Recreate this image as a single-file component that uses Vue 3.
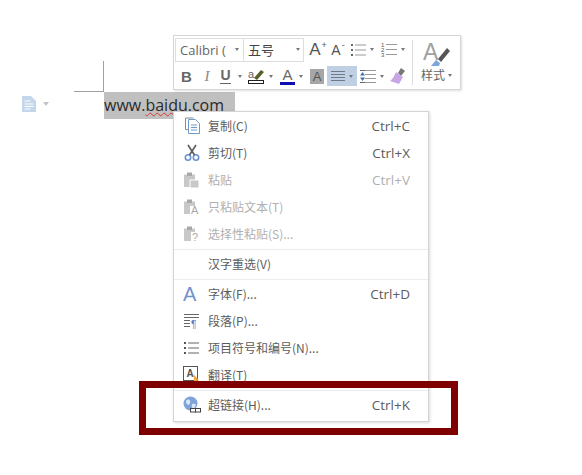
<template>
  <div class="page">
    <div class="crop-v"></div>
    <div class="crop-h"></div>

    <div class="margin-icon">
      <svg width="14" height="16" viewBox="0 0 14 16">
        <path d="M0 0h9l5 5v11H0z" fill="#c3d6ea" />
        <path d="M2.500 5h6M2.500 8h9M2.500 10.500h9M2.500 13h6" stroke="#fff" stroke-width="1.200" />
      </svg>
      <span class="margin-caret"></span>
    </div>

    <div class="doc-line"><span class="selected"><span class="url">www.<span class="typo">baidu</span>.com</span></span></div>

    <div class="toolbar">
      <div class="tool-main">
        <div class="tool-row first">
          <div class="combo font-combo">Calibri (<span class="caret"></span></div>
          <div class="combo size-combo">五号<span class="caret"></span></div>
          <div class="tool grow-a" style="width: 20px"><b>A</b><sup>+</sup></div>
          <div class="tool grow-a small" style="width: 20px"><b>A</b><sup>-</sup></div>
          <div class="tool" style="width: 28px">
            <svg width="16" height="14" v-html="icons.bullets"></svg><span class="caret"></span>
          </div>
          <div class="tool" style="width: 33px">
            <svg width="16" height="17" v-html="icons.numbers"></svg><span class="caret"></span>
          </div>
        </div>
        <div class="tool-row second">
          <div class="tool fmt bold" style="width: 21px">B</div>
          <div class="tool fmt ital" style="width: 20px">I</div>
          <div class="tool fmt under" style="width: 28px"><span class="u">U</span><span class="caret"></span></div>
          <div class="tool" style="width: 31px">
            <svg width="17" height="17" v-html="icons.highlight"></svg><span class="caret"></span>
          </div>
          <div class="tool" style="width: 31px">
            <span class="font-color">A</span><span class="caret"></span>
          </div>
          <div class="tool" style="width: 20px"><span class="shade">A</span></div>
          <div class="tool active" style="width: 30px">
            <svg width="14" height="12" v-html="icons.align"></svg><span class="caret"></span>
          </div>
          <div class="tool" style="width: 29px">
            <svg width="16" height="15" v-html="icons.spacing"></svg><span class="caret"></span>
          </div>
          <div class="tool" style="width: 22px">
            <svg width="18" height="18" v-html="icons.brush"></svg>
          </div>
        </div>
      </div>
      <div class="tool-style">
        <svg width="28" height="27" v-html="icons.pen"></svg>
        <div class="style-label">样式<span class="caret"></span></div>
      </div>
    </div>

    <div class="menu">
      <template v-for="(item, i) in menu" :key="i">
        <div v-if="item.sep" class="sep"></div>
        <div v-else class="item" :class="{ disabled: item.off }">
          <span class="item-icon">
            <span v-if="item.glyph" class="font-glyph">{{ item.glyph }}</span>
            <svg v-else-if="item.icon" width="20" height="18" v-html="icons[item.icon]"></svg>
          </span>
          <span class="item-label">{{ item.label }}</span>
          <span class="item-key">{{ item.key }}</span>
        </div>
      </template>
    </div>

    <div class="highlight-box"></div>
  </div>
</template>

<script setup>
const clipBase = '<path d="M1 3.500h11V16H1z" fill="#c8c8c8"/><path d="M4 1.500h5v3.500H4z" fill="#a8a8a8"/>'

const icons = {
  bullets: '<g fill="#666"><rect x="1" y="1" width="2" height="2"/><rect x="1" y="6" width="2" height="2"/><rect x="1" y="11" width="2" height="2"/></g><path d="M5 2h11M5 7h11M5 12h11" stroke="#999"/>',
  numbers: '<text x="0" y="6" font-size="6" fill="#555" font-family="Liberation Sans">1</text><text x="0" y="11" font-size="6" fill="#555" font-family="Liberation Sans">2</text><text x="0" y="15.500" font-size="6" fill="#555" font-family="Liberation Sans">3</text><path d="M5 3.500h11M5 8.500h11M5 13.500h11" stroke="#999"/>',
  highlight: '<text x="0" y="10" font-size="11" fill="#666" font-family="Liberation Sans">a</text><path d="M6 10l7-8 3 2-7 8z" fill="#5a5f2a"/><rect x="0.500" y="12.500" width="15" height="3" fill="#fff" stroke="#222"/>',
  align: '<path d="M0 1.500h14M0 4.500h14M0 7.500h14M0 10.500h14" stroke="#6f7a88"/>',
  spacing: '<path d="M5 1.500h11M5 5.500h11M5 9.500h11M5 13.500h11" stroke="#999"/><path d="M0 6.500L2.500 3 5 6.500zM0 8.500L2.500 12 5 8.500z" fill="#4a6fa8"/><path d="M0 1.500h5M0 13.500h5" stroke="#666"/>',
  brush: '<path d="M10 6l3-5 4 3-4 5z" fill="#777"/><path d="M8 5l7 5-4 7-9-3c3-2 4-5 6-9z" fill="#c8a6e6"/>',
  pen: '<text x="0" y="20" font-size="23" fill="#a0a0a0" font-family="Liberation Sans">A</text><path d="M15 19L24 8l3 3-9 11z" fill="#555"/><path d="M13 20l4 3-1 3H8z" fill="#7fa6dc"/>',
  copy: '<path d="M5.500 2.500h7l4 4v10h-11z" fill="#fff" stroke="#6f9bd0"/><path d="M2.500 1v11.500h3M2.500 1h8" fill="none" stroke="#8a8a8a"/><path d="M8 8h6M8 10.500h6M8 13h6" stroke="#6f9bd0"/>',
  cut: '<circle cx="5" cy="13.500" r="2.700" fill="none" stroke="#6a94cf" stroke-width="1.600"/><circle cx="13" cy="13.500" r="2.700" fill="none" stroke="#6a94cf" stroke-width="1.600"/><path d="M6.500 11L13 1M11.500 11L5 1" stroke="#5f5f5f" stroke-width="1.700"/>',
  paste: clipBase + '<path d="M7 9h9v8H7z" fill="#c8c8c8" stroke="#fff"/>',
  pasteText: clipBase + '<rect x="7" y="8" width="11" height="10" fill="#fff"/><text x="8" y="15.500" font-size="11" fill="#aaa" font-family="Liberation Sans">A</text>',
  pasteSpecial: clipBase + '<rect x="8" y="7" width="10" height="11" fill="#fff"/><text x="9" y="15.500" font-size="11" fill="#aaa" font-family="Liberation Sans">?</text>',
  para: '<path d="M1 2.500h15M1 5.500h15M1 8.500h6M1 11.500h6M1 14.500h6" stroke="#666"/><text x="8" y="15.500" font-size="10" fill="#4f7fbf" font-family="Liberation Sans">¶</text>',
  list: '<g fill="#555"><rect x="1" y="3" width="2" height="2"/><rect x="1" y="8" width="2" height="2"/><rect x="1" y="13" width="2" height="2"/></g><path d="M5 4h11M5 9h11M5 14h11" stroke="#666"/>',
  translate: '<rect x="0.500" y="0.500" width="14" height="14" fill="#fff" stroke="#555"/><text x="3.500" y="11" font-size="10" font-weight="700" fill="#555" font-family="Liberation Sans">A</text><path d="M10.500 8l5.500 6.500-2.500 0 .5 3-2 .5-1-3z" fill="#f0a840"/>',
  link: '<circle cx="7.500" cy="7.500" r="7" fill="#7ea4dc"/><path d="M3 5c2-3 5-1 4 2s-4 2-4-2zM9 8c3-1 5 0 3 3s-4 1-3-3z" fill="#dbe7f7"/><rect x="7.500" y="12.500" width="5" height="3.500" fill="#fff" stroke="#444"/><rect x="12.500" y="12.500" width="5" height="3.500" fill="#fff" stroke="#444"/>'
}

const menu = [
  { icon: 'copy', label: '复制(C)', key: 'Ctrl+C' },
  { icon: 'cut', label: '剪切(T)', key: 'Ctrl+X' },
  { icon: 'paste', label: '粘贴', key: 'Ctrl+V', off: true },
  { icon: 'pasteText', label: '只粘贴文本(T)', off: true },
  { icon: 'pasteSpecial', label: '选择性粘贴(S)...', off: true },
  { sep: true },
  { label: '汉字重选(V)' },
  { sep: true },
  { glyph: 'A', label: '字体(F)...', key: 'Ctrl+D' },
  { icon: 'para', label: '段落(P)...' },
  { icon: 'list', label: '项目符号和编号(N)...' },
  { icon: 'translate', label: '翻译(T)' },
  { sep: true },
  { icon: 'link', label: '超链接(H)...', key: 'Ctrl+K' }
]
</script>

<style>
html,
body {
  margin: 0;
  background: #fff;
}
</style>

<style scoped>
.page {
  position: relative;
  width: 582px;
  height: 475px;
  overflow: hidden;
  background: #fff;
  font-family: "Open Sans", "Noto Sans CJK SC", sans-serif;
  color: #555;
}

.crop-v {
  position: absolute;
  left: 103px;
  top: 61px;
  width: 1px;
  height: 31px;
  background: #a0a0a0;
}

.crop-h {
  position: absolute;
  left: 74px;
  top: 91px;
  width: 29px;
  height: 1px;
  background: #a0a0a0;
}

.margin-icon {
  position: absolute;
  left: 22px;
  top: 96px;
  display: flex;
  align-items: center;
  gap: 7px;
}

.margin-caret {
  border: 3px solid transparent;
  border-top: 4px solid #c4c4c4;
  border-bottom: 0;
}

.doc-line {
  position: absolute;
  left: 104px;
  top: 92px;
}

.selected {
  display: block;
  width: 131px;
  height: 27px;
  background: #c0c0c0;
}

.url {
  font-size: 16px;
  line-height: 27px;
  color: #2a2a2a;
}

.typo {
  text-decoration: underline wavy #d33;
  text-decoration-thickness: 1px;
}

.toolbar {
  position: absolute;
  left: 173px;
  top: 35px;
  width: 286px;
  height: 53px;
  display: flex;
  background: #fff;
  border: 1px solid #d5d5d5;
  box-shadow: 1px 1px 2px rgba(0, 0, 0, 0.12);
}

.tool-main {
  width: 238px;
  padding-left: 1px;
  display: flex;
  flex-direction: column;
}

.tool-row {
  display: flex;
  align-items: center;
}

.tool-row.first {
  height: 25px;
  margin-top: 1px;
}

.tool-row.second {
  height: 20px;
  margin-top: 4px;
  padding-left: 1px;
}

.combo {
  height: 24px;
  box-sizing: border-box;
  border: 1px solid #dedede;
  display: flex;
  align-items: center;
  justify-content: space-between;
  font-size: 13px;
  color: #666;
  padding: 0 4px;
}

.font-combo {
  width: 69px;
}

.size-combo {
  width: 61px;
  margin-left: -1px;
  margin-right: 4px;
  padding-right: 3px;
  color: #444;
  font-family: "Noto Sans CJK SC", sans-serif;
}

.tool {
  height: 20px;
  display: flex;
  align-items: center;
  justify-content: center;
  gap: 4px;
  flex: none;
}

.active {
  background: #bfd0e4;
}

.caret {
  display: inline-block;
  flex: none;
  border: 2.5px solid transparent;
  border-top: 3px solid #777;
  border-bottom: 0;
}

.grow-a {
  position: relative;
  font-family: "Liberation Sans", sans-serif;
  font-size: 17px;
  color: #555;
}

.grow-a.small {
  font-size: 14px;
}

.grow-a b {
  font-weight: 400;
}

.grow-a sup {
  font-size: 9px;
  line-height: 1;
  margin: -8px 0 0 -3px;
}

.fmt {
  font-family: "Liberation Sans", sans-serif;
  font-size: 15px;
  color: #666;
}

.bold {
  font-weight: 700;
}

.ital {
  font-family: "Liberation Serif", serif;
  font-style: italic;
  color: #888;
}

.under {
  gap: 7px;
  font-size: 14px;
  font-weight: 700;
}

.u {
  line-height: 15px;
  border-bottom: 1px solid #666;
}

.font-color {
  font-family: "Liberation Sans", sans-serif;
  font-size: 15px;
  line-height: 15px;
  color: #666;
  border-bottom: 3px solid #1010b0;
  padding: 0 2px;
}

.shade {
  width: 14px;
  height: 15px;
  background: #a6a6a6;
  font-family: "Liberation Sans", sans-serif;
  font-size: 13px;
  line-height: 15px;
  text-align: center;
  color: #555;
}

.tool-style {
  width: 47px;
  display: flex;
  flex-direction: column;
  align-items: center;
  margin: 4px 0;
  border-left: 1px solid #ddd;
}

.style-label {
  font-family: "Noto Sans CJK SC", sans-serif;
  font-size: 12px;
  line-height: 16px;
  color: #666;
  display: flex;
  align-items: center;
  gap: 3px;
}

.menu {
  position: absolute;
  left: 173px;
  top: 111px;
  width: 254px;
  height: 308px;
  padding-top: 1px;
  background: #fff;
  border: 1px solid #d4d4d4;
  box-shadow: 1px 1px 3px rgba(0, 0, 0, 0.15);
}

.item {
  height: 27px;
  box-sizing: border-box;
  padding-bottom: 1px;
  display: flex;
  align-items: center;
  font-size: 12px;
  color: #5c5c5c;
}

.item.disabled {
  color: #b0b0b0;
}

.item-icon {
  width: 34px;
  padding-left: 9px;
  box-sizing: border-box;
  display: flex;
  align-items: center;
}

.font-glyph {
  font-family: "Liberation Sans", sans-serif;
  font-size: 20px;
  line-height: 18px;
  color: #7392cc;
}

.item-label {
  flex: 1;
  margin-bottom: 2px;
  font-family: "Noto Sans CJK SC", sans-serif;
}

.item-key {
  padding-right: 18px;
  font-family: "Open Sans", sans-serif;
  font-size: 13.500px;
}

.sep {
  height: 1px;
  margin: 1px 0;
  background: #ececec;
}

.highlight-box {
  position: absolute;
  left: 139px;
  top: 381px;
  width: 319px;
  height: 54px;
  box-sizing: border-box;
  border: 7px solid #7f0000;
}
</style>
